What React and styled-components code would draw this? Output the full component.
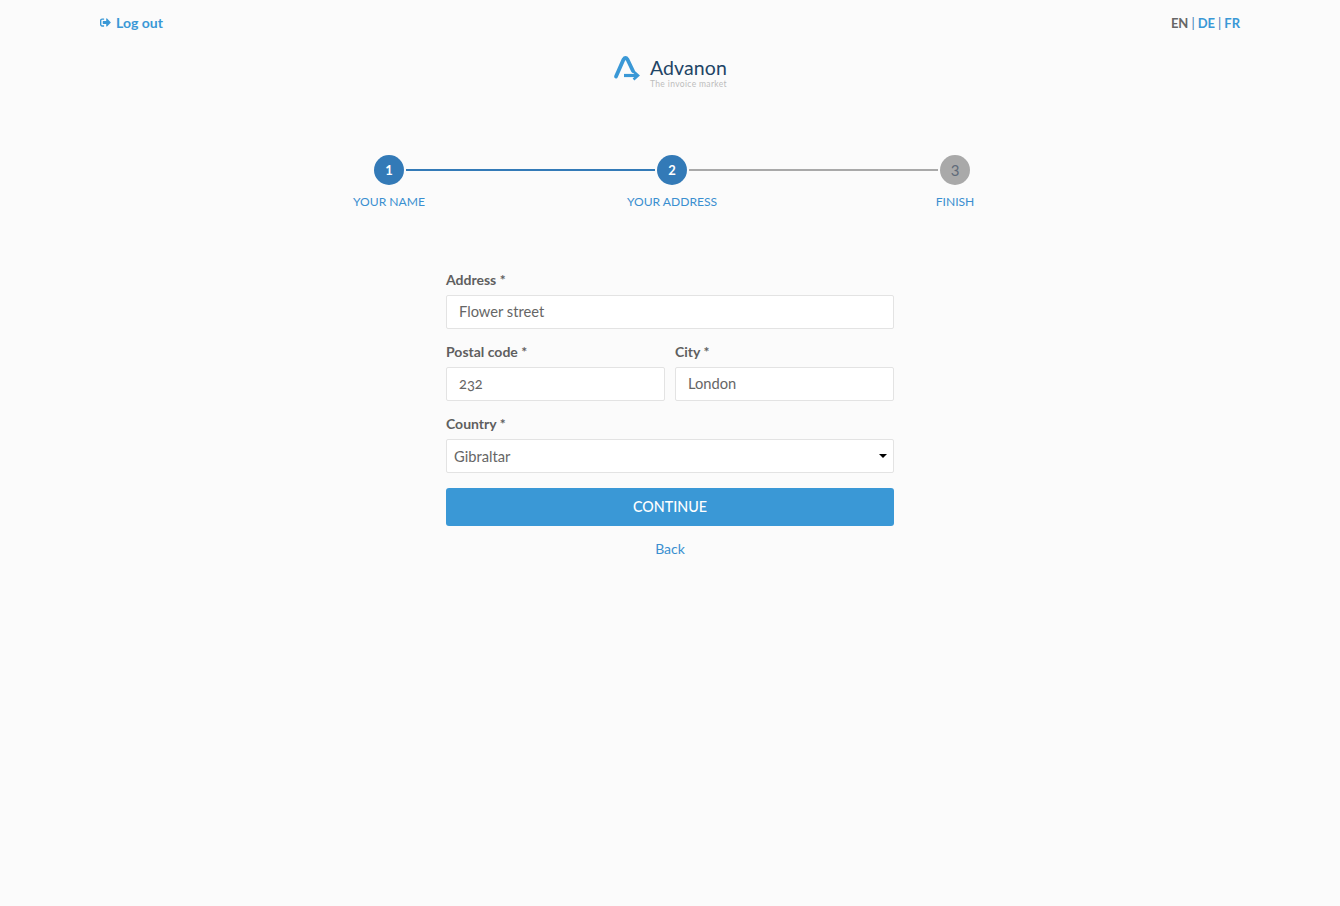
import React from "react";
import styled, { createGlobalStyle } from "styled-components";
import { FaSignOutAlt } from "react-icons/fa";

const GlobalStyle = createGlobalStyle`
  html, body {
    margin: 0;
    padding: 0;
    background: #fbfbfb;
  }
  body {
    font-family: "Lato", "Open Sans", sans-serif;
    color: #5f5f5f;
  }
  * {
    box-sizing: border-box;
  }
`;

const Page = styled.div`
  min-height: 906px;
  display: flex;
  flex-direction: column;
  align-items: center;
`;

const TopBar = styled.header`
  width: 100%;
  height: 46px;
  padding: 0 100px;
  display: flex;
  justify-content: space-between;
  align-items: center;
  font-size: 14px;
  font-weight: 700;
`;

const LogoutLink = styled.a`
  display: flex;
  align-items: center;
  gap: 5px;
  padding-bottom: 1px;
  color: #3a98d6;
  text-decoration: none;
  svg {
    font-size: 11px;
  }
`;

const Langs = styled.div`
  color: #3a7cb8;
  font-weight: 400;
  font-size: 13px;
  display: flex;
  gap: 3px;
`;

const Lang = styled.a`
  font-weight: 700;
  text-decoration: none;
  color: ${(p) => (p.$active ? "#666" : "#3a98d6")};
`;

const Brand = styled.div`
  margin-top: 8px;
  height: 36px;
  display: flex;
  align-items: flex-start;
  gap: 10px;
`;

const BrandText = styled.div`
  display: flex;
  flex-direction: column;
  padding-top: 2px;
`;

const BrandName = styled.span`
  font-size: 19.5px;
  line-height: 24px;
  letter-spacing: 0.1px;
  color: #1f4566;
`;

const BrandTag = styled.span`
  font-size: 8.5px;
  line-height: 8px;
  letter-spacing: 0.35px;
  color: #bdbdbd;
`;

const Stepper = styled.div`
  width: 596px;
  margin: 65px 0 0 4px;
  display: flex;
  align-items: flex-start;
`;

const Step = styled.div`
  width: 30px;
  display: flex;
  flex-direction: column;
  align-items: center;
`;

const Dot = styled.div`
  width: 30px;
  height: 30px;
  border-radius: 50%;
  display: flex;
  align-items: center;
  justify-content: center;
  font-weight: ${(p) => (p.$done ? 700 : 400)};
  background: ${(p) => (p.$done ? "#337ab7" : "#a9a9a9")};
  color: ${(p) => (p.$done ? "#fff" : "#5f6b7a")};
  font-size: ${(p) => (p.$done ? "13px" : "15px")};
`;

const StepLabel = styled.div`
  margin-top: 8px;
  font-size: 12.1px;
  line-height: 18px;
  white-space: nowrap;
  color: #3a8fd0;
`;

const Connector = styled.div`
  flex: 1;
  height: 2px;
  margin: 14px 2px 0;
  background: ${(p) => (p.$done ? "#337ab7" : "#a9a9a9")};
`;

const Form = styled.form`
  width: 448px;
  margin-top: 59px;
  display: flex;
  flex-direction: column;
`;

const Row = styled.div`
  display: flex;
  gap: 10px;
  margin-bottom: 13px;
`;

const Field = styled.div`
  flex: 1;
  min-width: 0;
  position: relative;
`;

const Label = styled.label`
  display: block;
  font-size: 14px;
  line-height: 20px;
  font-weight: 700;
  color: #5f5f5f;
  margin-bottom: 5px;
`;

const Input = styled.input`
  display: block;
  width: 100%;
  height: 34px;
  padding: 0 12px 2px;
  background: #fff;
  border: 1px solid #e3e3e3;
  border-radius: 2px;
  outline: none;
  font-family: inherit;
  font-size: 14.7px;
  font-variant-numeric: oldstyle-nums;
  color: #666;
`;

const Select = styled.select`
  display: block;
  width: 100%;
  height: 34px;
  padding: 0 7px 1px;
  appearance: none;
  background: #fff;
  border: 1px solid #e3e3e3;
  border-radius: 2px;
  outline: none;
  font-family: inherit;
  font-size: 14.7px;
  color: #666;
`;

const Caret = styled.span`
  position: absolute;
  right: 7px;
  bottom: 15px;
  width: 0;
  height: 0;
  border-left: 4px solid transparent;
  border-right: 4px solid transparent;
  border-top: 4px solid #000;
  pointer-events: none;
`;

const Continue = styled.button`
  height: 38px;
  margin-top: 2px;
  padding: 0 0 1px;
  border: none;
  border-radius: 3px;
  background: #3a98d6;
  color: #fff;
  font-family: inherit;
  font-size: 14.3px;
  font-weight: 500;
`;

const Back = styled.a`
  margin-top: 14px;
  text-align: center;
  font-size: 14px;
  line-height: 18px;
  color: #3a8fd0;
  text-decoration: none;
`;

const LogoMark = () => (
  <svg width="27" height="28" viewBox="0 0 27 28" fill="none" stroke="#3a98d6" strokeWidth="3.8">
    <path d="M3 22.5 L10.5 5.5 Q12.5 2.5 14.5 5.5 L20 17" strokeLinecap="round" strokeLinejoin="round" />
    <path d="M11 21.5 H24" strokeWidth="3.2" />
    <path d="M20.5 17.5 L25 21.5 L20.5 25.5" strokeWidth="2.6" />
  </svg>
);

const steps = [
  { n: 1, label: "YOUR NAME", done: true },
  { n: 2, label: "YOUR ADDRESS", done: true },
  { n: 3, label: "FINISH", done: false },
];

export default function App() {
  return (
    <Page>
      <GlobalStyle />
      <TopBar>
        <LogoutLink href="#">
          <FaSignOutAlt />
          Log out
        </LogoutLink>
        <Langs>
          <Lang $active href="#">EN</Lang>|<Lang href="#">DE</Lang>|<Lang href="#">FR</Lang>
        </Langs>
      </TopBar>

      <Brand>
        <LogoMark />
        <BrandText>
          <BrandName>Advanon</BrandName>
          <BrandTag>The invoice market</BrandTag>
        </BrandText>
      </Brand>

      <Stepper>
        {steps.map((s, i) => (
          <React.Fragment key={s.n}>
            <Step>
              <Dot $done={s.done}>{s.n}</Dot>
              <StepLabel>{s.label}</StepLabel>
            </Step>
            {i < steps.length - 1 && <Connector $done={i === 0} />}
          </React.Fragment>
        ))}
      </Stepper>

      <Form onSubmit={(e) => e.preventDefault()}>
        <Row>
          <Field>
            <Label>Address *</Label>
            <Input defaultValue="Flower street" />
          </Field>
        </Row>
        <Row>
          <Field>
            <Label>Postal code *</Label>
            <Input defaultValue="232" />
          </Field>
          <Field>
            <Label>City *</Label>
            <Input defaultValue="London" />
          </Field>
        </Row>
        <Row>
          <Field>
            <Label>Country *</Label>
            <Select defaultValue="Gibraltar">
              <option>Gibraltar</option>
            </Select>
            <Caret />
          </Field>
        </Row>
        <Continue type="submit">CONTINUE</Continue>
        <Back href="#">Back</Back>
      </Form>
    </Page>
  );
}
